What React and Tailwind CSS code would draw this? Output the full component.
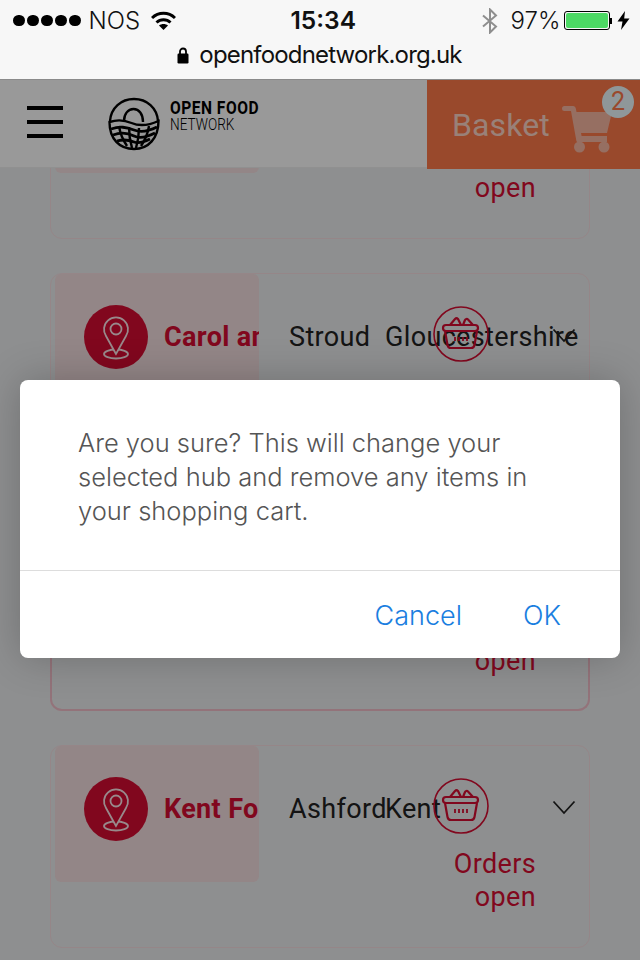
function StatusBar() {
  return (
    <div className="h-[80px] bg-[#f7f7f7] border-b border-[#8a8a8a] font-[Inter,sans-serif] text-[#111]">
      <div className="h-[41px] flex items-center pl-[13px]">
        <div className="flex gap-[2.5px]">
          {[0, 1, 2, 3, 4].map((i) => (
            <span key={i} className="w-[11.5px] h-[11.5px] rounded-full bg-black" />
          ))}
        </div>
        <span className="ml-[8px] w-[62px] shrink-0 text-[24px] font-light">NOS</span>
        <svg width="25" height="19" viewBox="0 0 25 19" className="shrink-0" fill="none" stroke="#000" strokeWidth="3">
          <path d="M1 7C7.500 .8 17.500 .8 24 7" />
          <path d="M5.500 11.500C9.500 7.800 15.500 7.800 19.500 11.500" />
          <path d="M12.500 19L8 14.500C10.500 12.500 14.500 12.500 17 14.500Z" fill="#000" stroke="none" />
        </svg>
        <span className="ml-[115px] w-[66px] shrink-0 text-[24.500px] font-semibold">15:34</span>
        <svg width="16" height="26" viewBox="0 0 16 26" className="ml-[125px] shrink-0" fill="none" stroke="#8e8e8e" strokeWidth="2">
          <path d="M1 7.500L14 18.500L8 24.500V1.500L14 7.500L1 18.500" />
        </svg>
        <span className="ml-[13px] w-[53px] shrink-0 text-[24px] font-light">97%</span>
        <div className="flex items-center shrink-0">
          <div className="w-[46px] h-[19px] rounded-[3px] border border-black p-[1px]">
            <div className="h-full bg-[#4cd964] rounded-[2px]" />
          </div>
          <div className="w-[2px] h-[6px] bg-black" />
        </div>
        <svg width="13" height="19" viewBox="0 0 13 19" className="ml-[5px] shrink-0">
          <path d="M8 0L0.500 10.500H5.500L4 19L12.500 7.500H7.200Z" fill="#000" />
        </svg>
      </div>
      <div className="flex items-center justify-center gap-[10px] pr-[1px]">
        <svg width="12" height="17" viewBox="0 0 12 17">
          <path d="M3 7V4.500a3 3 0 0 1 6 0V7" fill="none" stroke="#000" strokeWidth="1.800" />
          <rect x="0.500" y="6.500" width="11" height="10" rx="1.200" fill="#000" />
        </svg>
        <span className="text-[24px] leading-[28px] tracking-[-0.82px]">openfoodnetwork.org.uk</span>
      </div>
    </div>
  );
}

function Logo() {
  return (
    <svg width="52" height="54" viewBox="0 0 52 54" fill="none" stroke="#000" strokeWidth="2">
      <path d="M2 24C3 11 13 2 26 2s23 9 24 22" strokeWidth="2.400" />
      <path d="M16 24c0-7 4-12 9.500-12S35 17 35 25" strokeWidth="2.400" />
      <path d="M1.500 25c9-3 15-2 22 1s16 3 27-2c0 17-10 28-24.500 28S1.500 42 1.500 25Z" strokeWidth="2.400" />
      <path d="M3 32c9-3 15-2 23 1s15 1 23-3" strokeWidth="2.800" />
      <path d="M5 38c8-3 15-2 21 1s13 1 21-3" strokeWidth="2.800" />
      <path d="M9 44c7-2 12-1 17 1s10 0 16-3" strokeWidth="2.800" />
      <path d="M11 29c1 7 4 14 8 20M21 30c0 7 1 14 3 21M31 31c0 7-1 13-3 20M41 29c-1 7-4 14-8 20" strokeWidth="2.400" />
    </svg>
  );
}

function Cart() {
  return (
    <svg width="50" height="50" viewBox="0 0 50 50" fill="currentColor">
      <path d="M2.500 3H11c1.500 0 2.500 1 2.800 2.500L14.500 9H50l-5 21H19l.6 3H45v6H16c-1 0-1.500-.5-1.700-1.500L9 8H2.500a2.500 2.500 0 0 1 0-5Z" />
      <circle cx="17.500" cy="44" r="5.500" />
      <circle cx="42" cy="44" r="5.500" />
    </svg>
  );
}

function Header() {
  return (
    <div className="absolute inset-x-0 top-0 h-[88px] bg-white border-b border-[#f0f0f0] flex">
      <div className="w-[108px] pl-[27px] pt-[26px] flex flex-col gap-[10px]">
        <span className="w-[36px] h-[4px] bg-black" />
        <span className="w-[36px] h-[4px] bg-black" />
        <span className="w-[36px] h-[4px] bg-black" />
      </div>
      <div className="pt-[17px]">
        <Logo />
      </div>
      <div className="ml-[10px] pt-[19px] font-[Roboto,sans-serif] text-black">
        <div className="origin-left scale-x-[0.82] text-[19px] leading-[17px] font-bold tracking-[0.6px] whitespace-nowrap">OPEN FOOD</div>
        <div className="origin-left scale-x-[0.8] text-[17px] leading-[17px] font-light whitespace-nowrap">NETWORK</div>
      </div>
      <div className="relative ml-auto w-[213px] h-[89px] bg-[#ff7a4a] font-[Roboto,sans-serif] text-[#ffd7c9] flex items-center pl-[25px]">
        <span className="w-[110px] shrink-0 text-[32px] tracking-[0.1px]">Basket</span>
        <div className="mt-[7px] text-[#fbb9a4]">
          <Cart />
        </div>
        <span className="absolute left-[175px] top-[6px] w-[32px] h-[32px] rounded-full bg-[#eefcff] text-[#ff7a4a] text-[25px] leading-[32px] text-center">
          2
        </span>
      </div>
    </div>
  );
}

function PinBadge() {
  return (
    <div className="w-[64px] h-[64px] shrink-0 rounded-full bg-[#d80d32]">
      <svg width="64" height="64" viewBox="0 0 64 64" fill="none" stroke="#fde4e8" strokeWidth="1.800">
        <ellipse cx="32" cy="49" rx="12" ry="4.500" />
        <path d="M32 49L22 31a12 12 0 1 1 20 0Z" fill="#d80d32" />
        <circle cx="32" cy="24" r="5.500" />
      </svg>
    </div>
  );
}

function BasketBadge() {
  return (
    <svg width="56" height="56" viewBox="0 0 56 56" fill="none" stroke="#d80d32" strokeWidth="1.600">
      <circle cx="28" cy="28" r="27" />
      <path d="M12 25l2.500 14c.4 2 1.500 3 3.500 3h20c2 0 3.100-1 3.500-3L44 25" strokeWidth="2.200" />
      <rect x="10" y="19" width="35" height="6" rx="3" strokeWidth="2.200" />
      <path d="M17 19l5-6c1-1 2-1 3 0l3 6M30 19l2-5c.6-1 2-1.500 3-.5l5 5.500" strokeWidth="2.200" />
      <path d="M22 31v4M26 31v4M30 31v4M34 31v4" strokeWidth="1.800" />
    </svg>
  );
}

function Chevron() {
  return (
    <svg width="24" height="15" viewBox="0 0 24 15" fill="none" stroke="#222" strokeWidth="1.800" className="ml-[16px] mt-[54px] shrink-0">
      <path d="M1.500 1.500L12 13L22.500 1.500" />
    </svg>
  );
}

function Card({ name, town, county, ordersGap, height, children }) {
  return (
    <div className={`relative mx-[50px] rounded-[12px] border border-[#f8dfe3] ${height}`}>
      {children}
      <div className="flex items-start pl-[4px] font-[Roboto,sans-serif] text-[27px] leading-[33px] tracking-[0.35px]">
        <div className="w-[204px] h-[136px] shrink-0 rounded-[6px] bg-[#f5dfe1] overflow-hidden pt-[31px] pl-[29px] flex items-start gap-[16px]">
          <PinBadge />
          <span className="pt-[16px] font-bold text-[#d80d32] whitespace-nowrap">{name}</span>
        </div>
        <span className="ml-[30px] w-[96px] shrink-0 pt-[47px] text-[#222]">{town}</span>
        <span className="w-[48px] shrink-0 pt-[47px] text-[#222] whitespace-nowrap">{county}</span>
        <div className="w-[103px] shrink-0 pt-[32px] text-[#d80d32] text-right">
          <BasketBadge />
          <div className={ordersGap}>
            Orders
            <br />
            open
          </div>
        </div>
        <Chevron />
      </div>
    </div>
  );
}

function Dialog() {
  return (
    <div className="absolute left-[20px] top-[380px] w-[600px] h-[278px] rounded-[8px] bg-white shadow-[0_0_40px_rgba(0,0,0,0.22)] font-[Inter,sans-serif]">
      <p className="h-[191px] pl-[58px] pr-[50px] pt-[46px] text-[25.500px] leading-[34px] font-light text-[#555] border-b border-[#ddd]">
        Are you sure? This will change your selected hub and remove any items in your shopping cart.
      </p>
      <div className="flex justify-end gap-[61px] pr-[59px] pt-[28px] text-[27px] leading-[34px] font-light text-[#1a7ee0]">
        <span>Cancel</span>
        <span>OK</span>
      </div>
    </div>
  );
}

export default function App() {
  return (
    <div className="relative w-[640px] h-[960px] overflow-hidden bg-[#edeff0]">
      <StatusBar />
      <div className="relative h-[880px] overflow-hidden">
        <div className="-mt-[44px] flex flex-col gap-[34px]">
          <Card name="" town="" county="" ordersGap="pt-[14px]" height="h-[203px]" />
          <Card
            name="Carol and Dave"
            town="Stroud"
            county="Gloucestershire"
            ordersGap="pt-[250px]"
            height="h-[438px]"
          >
            <div className="absolute -inset-x-px -bottom-px h-[80px] rounded-b-[12px] border-x-2 border-b-2 border-[#f5c0cc]" />
          </Card>
          <Card name="Kent Food Hub" town="Ashford" county="Kent" ordersGap="pt-[14px]" height="h-[203px]" />
        </div>
        <Header />
      </div>
      <div className="absolute inset-x-0 bottom-0 top-[80px] bg-black/40" />
      <Dialog />
    </div>
  );
}
